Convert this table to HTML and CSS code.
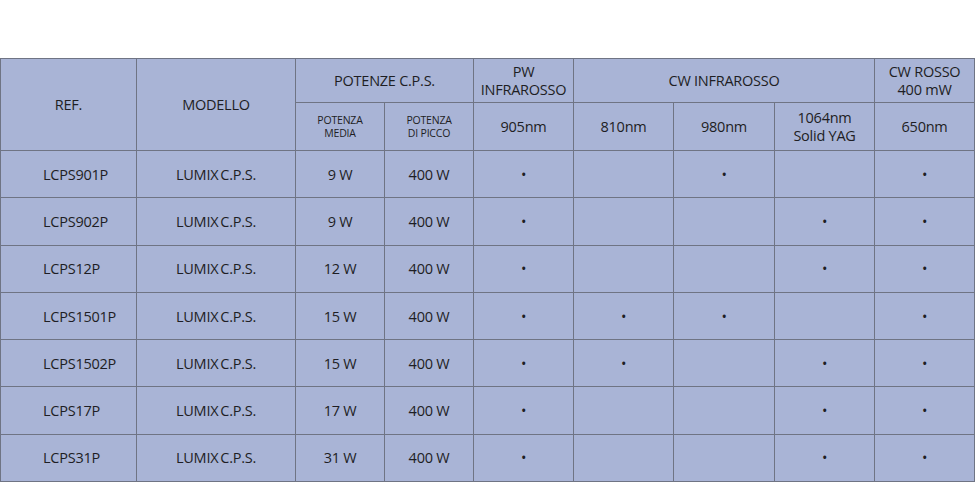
FILE: index.html
```html
<!DOCTYPE html>
<html lang="it">
<head>
<meta charset="utf-8">
<title>Lumix C.P.S.</title>
<link rel="stylesheet" href="styles.css">
</head>
<body>
<table class="spec">
  <colgroup>
    <col class="c-ref"><col class="c-mod"><col class="c-pw"><col class="c-pw"><col class="c-nm"><col class="c-nm"><col class="c-nm2"><col class="c-nm"><col class="c-nm">
  </colgroup>
  <thead>
    <tr class="h1">
      <th rowspan="2">REF.</th>
      <th rowspan="2">MODELLO</th>
      <th colspan="2">POTENZE C.P.S.</th>
      <th class="two">PW<br>INFRAROSSO</th>
      <th colspan="3">CW INFRAROSSO</th>
      <th class="two">CW ROSSO<br>400 mW</th>
    </tr>
    <tr class="h2">
      <th class="small">POTENZA<br>MEDIA</th>
      <th class="small">POTENZA<br>DI PICCO</th>
      <th>905nm</th>
      <th>810nm</th>
      <th>980nm</th>
      <th class="two">1064nm<br>Solid YAG</th>
      <th>650nm</th>
    </tr>
  </thead>
  <tbody>
    <tr><td class="ref">LCPS901P</td><td class="mod">LUMIX C.P.S.</td><td>9 W</td><td>400 W</td><td>•</td><td></td><td>•</td><td></td><td>•</td></tr>
    <tr><td class="ref">LCPS902P</td><td class="mod">LUMIX C.P.S.</td><td>9 W</td><td>400 W</td><td>•</td><td></td><td></td><td>•</td><td>•</td></tr>
    <tr><td class="ref">LCPS12P</td><td class="mod">LUMIX C.P.S.</td><td>12 W</td><td>400 W</td><td>•</td><td></td><td></td><td>•</td><td>•</td></tr>
    <tr><td class="ref">LCPS1501P</td><td class="mod">LUMIX C.P.S.</td><td>15 W</td><td>400 W</td><td>•</td><td>•</td><td>•</td><td></td><td>•</td></tr>
    <tr><td class="ref">LCPS1502P</td><td class="mod">LUMIX C.P.S.</td><td>15 W</td><td>400 W</td><td>•</td><td>•</td><td></td><td>•</td><td>•</td></tr>
    <tr><td class="ref">LCPS17P</td><td class="mod">LUMIX C.P.S.</td><td>17 W</td><td>400 W</td><td>•</td><td></td><td></td><td>•</td><td>•</td></tr>
    <tr><td class="ref">LCPS31P</td><td class="mod">LUMIX C.P.S.</td><td>31 W</td><td>400 W</td><td>•</td><td></td><td></td><td>•</td><td>•</td></tr>
  </tbody>
</table>
</body>
</html>
```
FILE: styles.css
```css
html, body {
  margin: 0;
  padding: 0;
  background: #ffffff;
}
body {
  padding-top: 58px;
  font-family: "Open Sans", "Noto Sans", sans-serif;
  color: #1e1e24;
}
.spec {
  border-collapse: collapse;
  table-layout: fixed;
  width: 975px;
  background: #a9b4d6;
}
.c-ref { width: 136px; }
.c-mod { width: 159px; }
.c-pw { width: 89px; }
.c-nm { width: 100px; }
.c-nm2 { width: 101px; }
.spec th, .spec td {
  border: 1px solid #6f7484;
  text-align: center;
  vertical-align: middle;
  padding: 0;
  font-weight: 400;
  font-size: 14.5px;
  line-height: 17px;
  letter-spacing: -0.25px;
}
.h1 th { height: 43px; }
.h2 th { height: 47px; }
.spec th.two {
  line-height: 17.5px;
}
.spec th.small {
  font-size: 10.5px;
  line-height: 12.5px;
  letter-spacing: -0.2px;
}
.spec td { height: 46.3px; }
.spec td.ref {
  text-align: left;
  padding-left: 42px;
}
.spec td.mod { word-spacing: -1.6px; }
```
